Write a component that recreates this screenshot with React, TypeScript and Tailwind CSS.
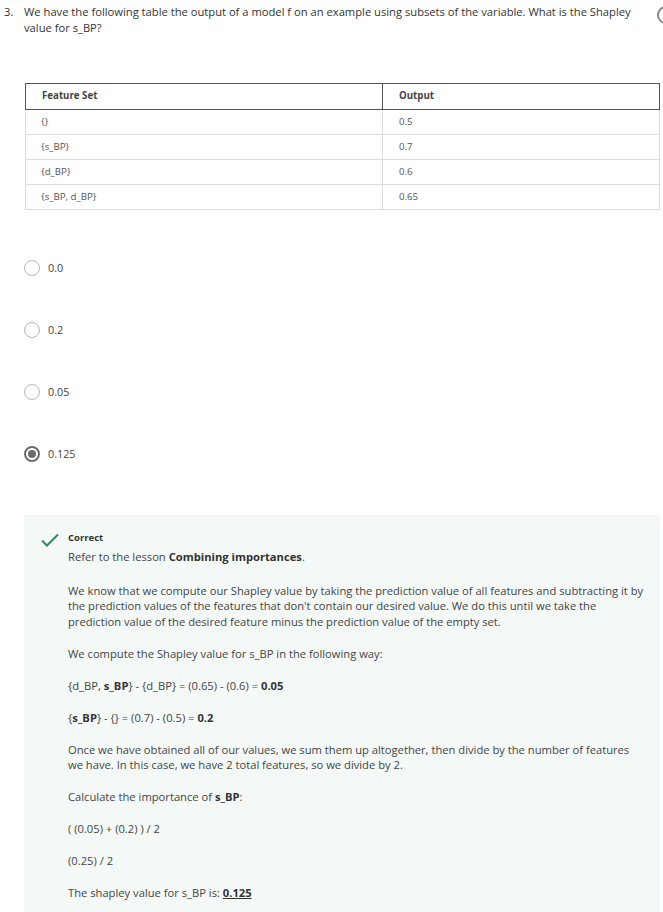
import React from "react";

const font = { fontFamily: '"Open Sans", "Liberation Sans", sans-serif' };

function Radio({ label, checked }: { label: string; checked?: boolean }) {
  return (
    <div className="flex items-center h-[16px]">
      {checked ? (
        <div className="w-[16px] h-[16px] rounded-full border-[2px] border-[#6b6b6b] flex items-center justify-center">
          <div className="w-[8px] h-[8px] rounded-full bg-[#6b6b6b]" />
        </div>
      ) : (
        <div className="w-[16px] h-[16px] rounded-full border border-[#b5b5b5]" />
      )}
      <span className="ml-[8px] text-[10.8px] text-[#444]">{label}</span>
    </div>
  );
}

export default function App() {
  const rows = [
    ["{}", "0.5"],
    ["{s_BP}", "0.7"],
    ["{d_BP}", "0.6"],
    ["{s_BP, d_BP}", "0.65"],
  ];
  return (
    <div className="relative w-[663px] h-[912px] overflow-hidden bg-white text-[#333]" style={font}>
      <div className="absolute right-[-12px] top-[6px] w-[18px] h-[18px] rounded-full border-[2px] border-[#888]" />
      <div className="flex pt-[4px] pl-[4px] pr-[18px] text-[11.2px] leading-[16px]">
        <span className="w-[20px] shrink-0">3.</span>
        <p>
          We have the following table the output of a model f on an example using subsets of the variable. What is the Shapley value for s_BP?
        </p>
      </div>

      <div className="ml-[25px] mt-[47px] mr-[3px]">
        <table className="w-full border-collapse text-[9.7px] text-[#555]">
          <thead>
            <tr className="border-t border-b border-[#555] h-[26px]">
              <th className="w-[357px] text-left font-bold pl-[16px] border-l border-[#555] text-[#444]">Feature Set</th>
              <th className="text-left font-bold pl-[16px] border-l border-r border-[#555] text-[#444]">Output</th>
            </tr>
          </thead>
          <tbody>
            {rows.map((r, i) => (
              <tr key={i} className="h-[25px] border-b border-[#dcdcdc]">
                <td className="pl-[15px] border-l border-[#dcdcdc]">{r[0]}</td>
                <td className="pl-[16px] border-l border-r border-[#dcdcdc]">{r[1]}</td>
              </tr>
            ))}
          </tbody>
        </table>
      </div>

      <div className="ml-[24px] mt-[50px] flex flex-col gap-[46px]">
        <Radio label="0.0" />
        <Radio label="0.2" />
        <Radio label="0.05" />
        <Radio label="0.125" checked />
      </div>

      <div className="ml-[24px] mt-[53px] mr-[3px] bg-[#f4f9f8] pt-[15px] pb-[20px] pl-[16px] pr-[14.5px] text-[11.2px] leading-[15.5px] text-[#444]">
        <div className="flex">
          <svg width="20" height="16" viewBox="0 0 20 16" className="mt-[2px] shrink-0">
            <path d="M2 8.5 L7 13.5 L18 2.5" fill="none" stroke="#2e8a57" strokeWidth="2" />
          </svg>
          <div className="ml-[8px]">
            <div className="text-[9.5px] font-bold leading-[16px] text-[#333]">Correct</div>
            <div className="mt-[3px] flex flex-col gap-[16.5px]">
              <p className="mb-[1.5px]">Refer to the lesson <b className="font-bold text-[#333]">Combining importances</b>.</p>
              <p>
                We know that we compute our Shapley value by taking the prediction value of all features and subtracting it by the prediction values of the features that don't contain our desired value. We do this until we take the prediction value of the desired feature minus the prediction value of the empty set.
              </p>
              <p>We compute the Shapley value for s_BP in the following way:</p>
              <p>
                {"{d_BP, "}<b className="font-bold text-[#333]">s_BP</b>{"} - {d_BP} = (0.65) - (0.6) = "}
                <b className="font-bold text-[#333]">0.05</b>
              </p>
              <p>
                {"{"}<b className="font-bold text-[#333]">s_BP</b>{"} - {} = (0.7) - (0.5) = "}
                <b className="font-bold text-[#333]">0.2</b>
              </p>
              <p>
                Once we have obtained all of our values, we sum them up altogether, then divide by the number of features we have. In this case, we have 2 total features, so we divide by 2.
              </p>
              <p>
                Calculate the importance of <b className="font-bold text-[#333]">s_BP</b>:
              </p>
              <p>( (0.05) + (0.2) ) / 2</p>
              <p>(0.25) / 2</p>
              <p>
                The shapley value for s_BP is: <b className="font-bold underline text-[#333]">0.125</b>
              </p>
            </div>
          </div>
        </div>
      </div>
    </div>
  );
}
